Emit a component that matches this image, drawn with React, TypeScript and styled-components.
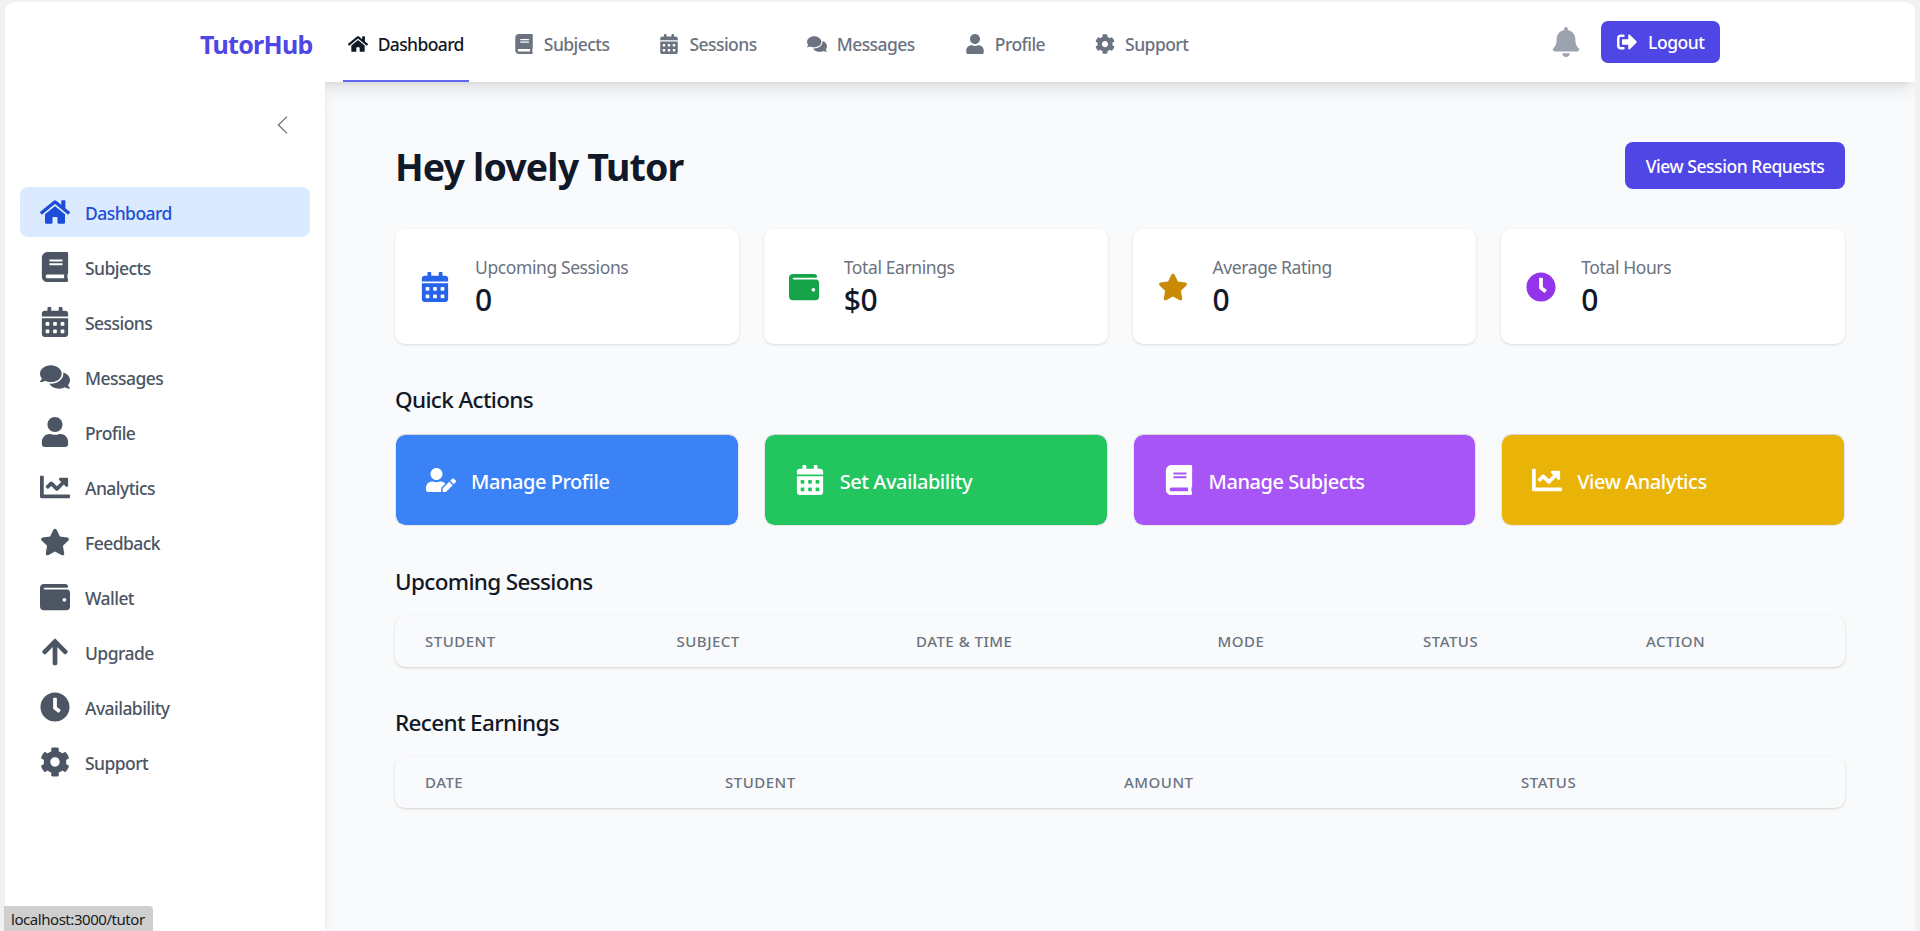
import React from "react";
import styled, { createGlobalStyle } from "styled-components";
import {
  FaHome, FaBook, FaCalendarAlt, FaComments, FaUser, FaChartLine, FaStar, FaWallet,
  FaArrowUp, FaClock, FaCog, FaBell, FaSignOutAlt, FaUserEdit,
} from "react-icons/fa";

const FONT = `"Noto Sans", "Open Sans", "Liberation Sans", sans-serif`;

const Global = createGlobalStyle`
  * { box-sizing: border-box; }
  html, body { margin: 0; padding: 0; height: 100%; background: #f0f0f0; overflow: hidden; }
  body { font-family: ${FONT}; }
`;

const Frame = styled.div`
  width: 1920px;
  height: 931px;
  padding: 2px 5px 0;
  background: #f1f1f1;
  overflow: hidden;
  position: relative;
`;
const Page = styled.div`
  width: 1910px;
  height: 929px;
  display: flex;
  flex-direction: column;
  background: #f9fafb;
  border-radius: 10px 10px 0 0;
  overflow: hidden;
`;
const Header = styled.header`
  height: 80px;
  flex: none;
  background: #fff;
  box-shadow: 0 10px 15px -3px rgba(0,0,0,.1), 0 4px 6px -4px rgba(0,0,0,.1);
  display: flex;
  align-items: center;
  padding: 0 195px;
  position: relative;
  z-index: 1;
`;
const Logo = styled.div`
  font-size: 25px;
  font-weight: 700;
  color: #4f46e5;
  letter-spacing: -0.7px;
  margin-right: 30px;
  padding-top: 4px;
`;
const TopNav = styled.nav`
  display: flex;
  gap: 40px;
  height: 80px;
  flex: 1;
`;
const TopLink = styled.a<{ $active?: boolean }>`
  display: flex;
  align-items: center;
  gap: 10px;
  padding: 5px 5px 0;
  font-size: 17.5px;
  font-weight: 500;
  letter-spacing: ${(p) => (p.$active ? "-0.62px" : "-0.55px")};
  color: ${(p) => (p.$active ? "#111827" : "#6b7280")};
  border-bottom: 2px solid ${(p) => (p.$active ? "#6366f1" : "transparent")};
  svg { width: 20px; height: 20px; flex: none; }
`;
const Bell = styled.span`
  display: flex;
  color: #9ca3af;
  margin-right: 20px;
  svg { width: 30px; height: 30px; }
`;
const LogoutButton = styled.button`
  height: 42px;
  width: 119px;
  display: flex;
  align-items: center;
  gap: 11px;
  padding: 0 16px;
  border: 0;
  border-radius: 7px;
  background: #4f46e5;
  color: #fff;
  font: 500 17.5px ${FONT};
  letter-spacing: -0.45px;
  svg { width: 20px; height: 20px; flex: none; }
`;
const Body = styled.div`
  flex: 1;
  display: flex;
  min-height: 0;
`;
const Sidebar = styled.aside`
  width: 320px;
  flex: none;
  background: #fff;
  box-shadow: 0 10px 15px -3px rgba(0,0,0,.1), 0 4px 6px -4px rgba(0,0,0,.1);
  padding: 34px 15px 0;
  position: relative;
  z-index: 2;
`;
const Toggle = styled.div`
  display: flex;
  justify-content: flex-end;
  color: #6b7280;
  padding-right: 22px;
  height: 71px;
  svg { width: 11px; height: 18px; }
`;
const SideList = styled.nav`
  display: flex;
  flex-direction: column;
  gap: 5px;
`;
const SideLink = styled.a<{ $active?: boolean }>`
  height: 50px;
  display: flex;
  align-items: center;
  gap: 15px;
  padding: 0 20px;
  border-radius: 8px;
  font-size: 17.5px;
  font-weight: 500;
  letter-spacing: -0.55px;
  color: ${(p) => (p.$active ? "#1d4ed8" : "#4b5563")};
  background: ${(p) => (p.$active ? "#dbeafe" : "transparent")};
  svg { width: 30px; height: 30px; flex: none; }
`;
const SideLabel = styled.span`
  padding-top: 2px;
`;
const Main = styled.main`
  flex: 1;
  padding: 60px 70px 0;
`;
const TitleRow = styled.div`
  display: flex;
  align-items: center;
  justify-content: space-between;
  height: 47px;
  margin-bottom: 40px;
`;
const Title = styled.h1`
  margin: 0;
  padding-top: 2px;
  font-size: 37.5px;
  font-weight: 700;
  color: #111827;
  letter-spacing: -0.85px;
`;
const PrimaryButton = styled.button`
  width: 220px;
  height: 47px;
  border: 0;
  border-radius: 8px;
  background: #4f46e5;
  color: #fff;
  font: 500 17.5px ${FONT};
  letter-spacing: -0.45px;
`;
const FourGrid = styled.div`
  display: grid;
  grid-template-columns: repeat(4, 1fr);
  gap: 25px;
`;
const StatCard = styled.div`
  height: 115px;
  display: flex;
  align-items: center;
  gap: 25px;
  padding: 0 25px;
  background: #fff;
  border-radius: 10px;
  box-shadow: 0 1px 3px rgba(0,0,0,.1), 0 1px 2px -1px rgba(0,0,0,.1);
`;
const StatIcon = styled.span<{ $color: string }>`
  display: flex;
  color: ${(p) => p.$color};
  svg { width: 30px; height: 30px; }
`;
const StatLabel = styled.div`
  font-size: 17.5px;
  letter-spacing: -0.4px;
  color: #6b7280;
  line-height: 26px;
  margin-top: -1px;
`;
const StatValue = styled.div`
  font-size: 30px;
  font-weight: 500;
  color: #111827;
  line-height: 39px;
  letter-spacing: -0.5px;
`;
const SectionTitle = styled.h2<{ $top: number }>`
  margin: ${(p) => p.$top}px 0 19px;
  font-size: 22.5px;
  line-height: 30px;
  font-weight: 500;
  color: #111827;
  letter-spacing: -0.65px;
`;
const ActionCard = styled.a<{ $bg: string }>`
  height: 92px;
  display: flex;
  align-items: center;
  gap: 15px;
  padding: 0 30px;
  border-radius: 10px;
  border: 1px solid #e5e7eb;
  border-top-color: #d1d5db;
  background: ${(p) => p.$bg};
  background-clip: padding-box;
  color: #fff;
  font-size: 20px;
  font-weight: 500;
  letter-spacing: -0.45px;
  svg { width: 30px; height: 30px; flex: none; }
`;
const ActionLabel = styled.span`
  padding-top: 2px;
`;
const TableHead = styled.div<{ $columns: string }>`
  height: 51px;
  display: grid;
  grid-template-columns: ${(p) => p.$columns};
  align-items: center;
  background: #f9fafb;
  border-radius: 10px;
  box-shadow: 0 1px 3px rgba(0,0,0,.13), 0 1px 2px -1px rgba(0,0,0,.1);
`;
const HeadCell = styled.div`
  padding: 0 0 2px 30px;
  font-size: 15px;
  font-weight: 500;
  color: #6b7280;
  letter-spacing: 0.5px;
  text-transform: uppercase;
`;
const StatusBar = styled.div`
  position: absolute;
  left: 4px;
  bottom: 0;
  height: 25px;
  width: 149px;
  padding-left: 7px;
  display: flex;
  align-items: center;
  background: #cfcfcf;
  border-radius: 0 4px 0 0;
  color: #1a1a1a;
  font-size: 15px;
  letter-spacing: -0.45px;
  z-index: 5;
`;

const ChevronIcon = () => (
  <svg viewBox="0 0 11 18" fill="none" stroke="currentColor" strokeWidth="1.3">
    <path d="M10 .6 1.4 9 10 17.4" />
  </svg>
);

const topLinks = [
  [FaHome, "Dashboard"], [FaBook, "Subjects"], [FaCalendarAlt, "Sessions"],
  [FaComments, "Messages"], [FaUser, "Profile"], [FaCog, "Support"],
] as const;
const sideLinks = [
  [FaHome, "Dashboard"], [FaBook, "Subjects"], [FaCalendarAlt, "Sessions"], [FaComments, "Messages"],
  [FaUser, "Profile"], [FaChartLine, "Analytics"], [FaStar, "Feedback"], [FaWallet, "Wallet"],
  [FaArrowUp, "Upgrade"], [FaClock, "Availability"], [FaCog, "Support"],
] as const;
const stats = [
  [FaCalendarAlt, "#2563eb", "Upcoming Sessions", "0"],
  [FaWallet, "#16a34a", "Total Earnings", "$0"],
  [FaStar, "#ca8a04", "Average Rating", "0"],
  [FaClock, "#9333ea", "Total Hours", "0"],
] as const;
const actions = [
  [FaUserEdit, "#3b82f6", "Manage Profile"],
  [FaCalendarAlt, "#22c55e", "Set Availability"],
  [FaBook, "#a855f7", "Manage Subjects"],
  [FaChartLine, "#eab308", "View Analytics"],
] as const;

export default function App() {
  return (
    <Frame>
      <Global />
      <Page>
        <Header>
          <Logo>TutorHub</Logo>
          <TopNav>
            {topLinks.map(([Icon, label], i) => (
              <TopLink key={label} $active={i === 0}><Icon />{label}</TopLink>
            ))}
          </TopNav>
          <Bell><FaBell /></Bell>
          <LogoutButton><FaSignOutAlt />Logout</LogoutButton>
        </Header>
        <Body>
          <Sidebar>
            <Toggle><ChevronIcon /></Toggle>
            <SideList>
              {sideLinks.map(([Icon, label], i) => (
                <SideLink key={label} $active={i === 0}><Icon /><SideLabel>{label}</SideLabel></SideLink>
              ))}
            </SideList>
          </Sidebar>
          <Main>
            <TitleRow>
              <Title>Hey lovely Tutor</Title>
              <PrimaryButton>View Session Requests</PrimaryButton>
            </TitleRow>
            <FourGrid>
              {stats.map(([Icon, color, label, value]) => (
                <StatCard key={label}>
                  <StatIcon $color={color}><Icon /></StatIcon>
                  <div>
                    <StatLabel>{label}</StatLabel>
                    <StatValue>{value}</StatValue>
                  </div>
                </StatCard>
              ))}
            </FourGrid>
            <SectionTitle $top={41}>Quick Actions</SectionTitle>
            <FourGrid>
              {actions.map(([Icon, bg, label]) => (
                <ActionCard key={label} $bg={bg}><Icon /><ActionLabel>{label}</ActionLabel></ActionCard>
              ))}
            </FourGrid>
            <SectionTitle $top={41}>Upcoming Sessions</SectionTitle>
            <TableHead $columns="251.5px 239.5px 301.5px 205.5px 223px 229px">
              {["Student", "Subject", "Date & Time", "Mode", "Status", "Action"].map((h) => (
                <HeadCell key={h}>{h}</HeadCell>
              ))}
            </TableHead>
            <SectionTitle $top={41}>Recent Earnings</SectionTitle>
            <TableHead $columns="300px 399px 397px 354px">
              {["Date", "Student", "Amount", "Status"].map((h) => (
                <HeadCell key={h}>{h}</HeadCell>
              ))}
            </TableHead>
          </Main>
        </Body>
      </Page>
      <StatusBar>localhost:3000/tutor</StatusBar>
    </Frame>
  );
}
